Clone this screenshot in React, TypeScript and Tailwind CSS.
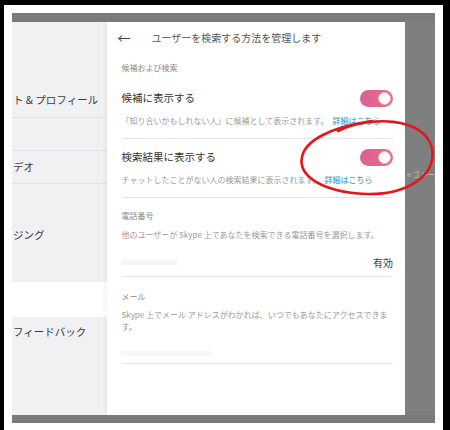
import React from "react";

const Toggle = () => (
    <div className="w-[33px] h-[17px] rounded-full bg-gradient-to-r from-[#db5f97] to-[#e86f86] flex items-center justify-end p-[2px]">
        <div className="w-[13px] h-[13px] rounded-full bg-white border border-[#f0b2ae]" />
    </div>
);

const Divider = ({ className = "" }: { className?: string }) => (
    <div className={`h-px bg-[#e4e4e4] ml-[1px] ${className}`} />
);

export default function App() {
    return (
        <div className="relative w-[450px] h-[430px] bg-black pt-[5px] pl-[4px] pr-[7px] font-['Noto_Sans_CJK_JP',sans-serif]">
            <div className="h-full bg-white pt-[8px] px-[8px] pb-[7px] flex flex-col">
                {/* dimmed top strip */}
                <div className="h-[9px] bg-[#7b7b7b]" />

                <div className="flex-1 flex min-h-0">
                    {/* settings menu behind the dialog */}
                    <aside className="w-[96px] flex flex-col text-[10.5px] text-[#3a3a3a] whitespace-nowrap overflow-hidden">
                        <div className="h-[95px] bg-[#f1f1f4] flex items-end pb-[9px] pl-[1px]">ト & プロフィール</div>
                        <div className="h-px bg-[#e2e2e6]" />
                        <div className="h-[32px] bg-[#f1f1f4]" />
                        <div className="h-px bg-[#e2e2e6]" />
                        <div className="h-[32px] bg-[#f1f1f4] flex items-center pl-[1px]">デオ</div>
                        <div className="h-px bg-[#e2e2e6]" />
                        <div className="h-[98px] bg-[#f1f1f4] pt-[43px] pl-[1px] leading-[16px]">ジング</div>
                        <div className="h-[35px] bg-white" />
                        <div className="flex-1 bg-[#f1f1f4] pt-[7px] pl-[1px] leading-[16px]">フィードバック</div>
                    </aside>

                    {/* dialog */}
                    <main className="w-[299px] bg-white shadow-[-2px_0_4px_rgba(0,0,0,0.05)] pt-[5px] pl-[14px] pr-[12px]">
                        <div className="h-[20px] flex items-center -ml-[4px]">
                            <span className="w-[14px] text-[13px] leading-none text-[#444]">←</span>
                            <span className="ml-[20px] text-[10px] text-[#555]">ユーザーを検索する方法を管理します</span>
                        </div>

                        <div className="mt-[14px] h-[14px] flex items-center text-[8px] text-[#8a8a8a]">候補および検索</div>

                        <div className="mt-[13px] h-[20px] flex items-center justify-between">
                            <span className="text-[10.5px] text-[#333]">候補に表示する</span>
                            <Toggle />
                        </div>
                        <div className="mt-[6px] h-[14px] flex items-center text-[8px] text-[#9a9a9a] whitespace-nowrap">
                            「知り合いかもしれない人」に候補として表示されます。<span className="ml-[4px] text-[#2e8cc6]">詳細はこちら</span>
                        </div>
                        <Divider className="mt-[10px]" />

                        <div className="mt-[8px] h-[20px] flex items-center justify-between">
                            <span className="text-[10.5px] text-[#333]">検索結果に表示する</span>
                            <Toggle />
                        </div>
                        <div className="mt-[6px] h-[14px] flex items-center text-[8px] text-[#9a9a9a] whitespace-nowrap">
                            チャットしたことがない人の検索結果に表示されます。<span className="ml-[4px] text-[#2e8cc6]">詳細はこちら</span>
                        </div>
                        <Divider className="mt-[10px]" />

                        <div className="mt-[11px] h-[14px] flex items-center text-[8px] text-[#8a8a8a]">電話番号</div>
                        <div className="mt-[5px] h-[14px] flex items-center text-[8px] text-[#9a9a9a] whitespace-nowrap">
                            他のユーザーが Skype 上であなたを検索できる電話番号を選択します。
                        </div>
                        <div className="mt-[12px] h-[16px] flex items-center justify-between">
                            <div className="w-[56px] h-[6px] bg-[#f6f6f6]" />
                            <span className="text-[10px] text-[#444]">有効</span>
                        </div>
                        <Divider className="mt-[6px]" />

                        <div className="mt-[13px] h-[14px] flex items-center text-[8px] text-[#8a8a8a]">メール</div>
                        <p className="mt-[5px] text-[8px] leading-[12px] text-[#9a9a9a]">
                            Skype 上でメール アドレスがわかれば、いつでもあなたにアクセスできま<br />す。
                        </p>
                        <div className="mt-[16px] h-[8px] flex items-center">
                            <div className="w-[90px] h-[5px] bg-[#f7f7f7]" />
                        </div>
                        <Divider className="mt-[6px]" />
                    </main>

                    {/* dimmed right strip */}
                    <div className="flex-1 bg-[#7f7f7f] pt-[147px] pl-[2px]">
                        <div className="text-[7px] leading-[10px] text-[#c9c9c9] whitespace-nowrap">ıı ゴ ンー</div>
                    </div>
                </div>

                {/* dimmed bottom strip */}
                <div className="h-[8px] bg-[#7a7a7a]" />
            </div>

            {/* red hand-drawn circle */}
            <svg className="absolute inset-0 pointer-events-none" width="450" height="430" viewBox="0 0 450 430" fill="none">
                <path
                    d="M338 131 C 368 116 424 116 432 148 C 437 178 404 195 366 194 C 322 192 298 176 302 157 C 305 141 330 127 372 121"
                    stroke="#e3161c"
                    strokeWidth="2.6"
                    strokeLinecap="round"
                />
            </svg>
        </div>
    );
}
